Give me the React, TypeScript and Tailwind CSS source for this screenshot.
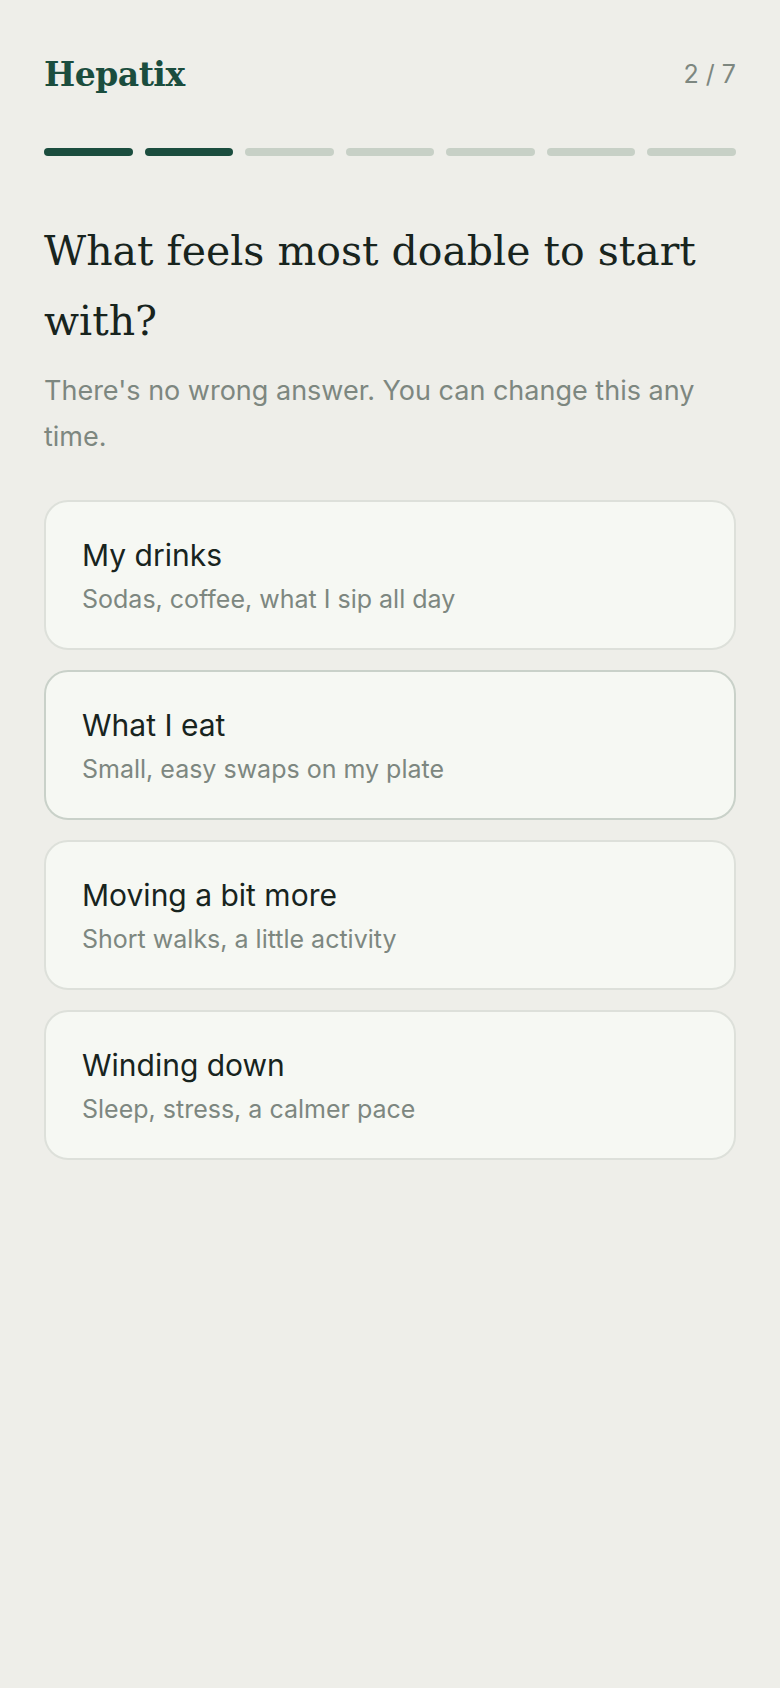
const options = [
  { title: "My drinks", sub: "Sodas, coffee, what I sip all day" },
  { title: "What I eat", sub: "Small, easy swaps on my plate", active: true },
  { title: "Moving a bit more", sub: "Short walks, a little activity" },
  { title: "Winding down", sub: "Sleep, stress, a calmer pace" },
];

const App = () => {
  return (
    <div className="min-h-screen bg-[#eeeee9] px-[44px] pt-[52px] font-['Inter',sans-serif]">
      <div className="flex items-center justify-between">
        <h1 className="font-['DejaVu_Serif',serif] text-[33px] font-bold leading-[46px] tracking-[-0.5px] text-[#1b4d3e]">
          Hepatix
        </h1>
        <span className="text-[25px] text-[#7d8780]">2 / 7</span>
      </div>

      <div className="mt-[50px] flex gap-3">
        {[0, 1, 2, 3, 4, 5, 6].map((i) => (
          <div
            key={i}
            className={`h-2 flex-1 rounded-full ${i < 2 ? "bg-[#1b4d3e]" : "bg-[#c7d0c6]"}`}
          />
        ))}
      </div>

      <h2 className="mt-[60px] font-['DejaVu_Serif',serif] text-[41px] leading-[70px] text-[#18241e]">
        What feels most doable to start with?
      </h2>
      <p className="mt-[12px] text-[27px] leading-[46px] text-[#7d8780]">
        There's no wrong answer. You can change this any time.
      </p>

      <div className="mt-[40px] flex flex-col gap-5">
        {options.map((o) => (
          <button
            key={o.title}
            className={`flex flex-col items-start rounded-3xl border-2 bg-[#f6f8f3] px-[36px] pt-[35px] pb-[34px] text-left ${
              o.active ? "border-[#c9d1c9]" : "border-[#dde0da]"
            }`}
          >
            <span className="text-[30px] leading-[37px] text-[#18241e]">{o.title}</span>
            <span className="mt-[10px] text-[25px] leading-[30px] text-[#7d8780]">{o.sub}</span>
          </button>
        ))}
      </div>
    </div>
  );
};

export default App;
